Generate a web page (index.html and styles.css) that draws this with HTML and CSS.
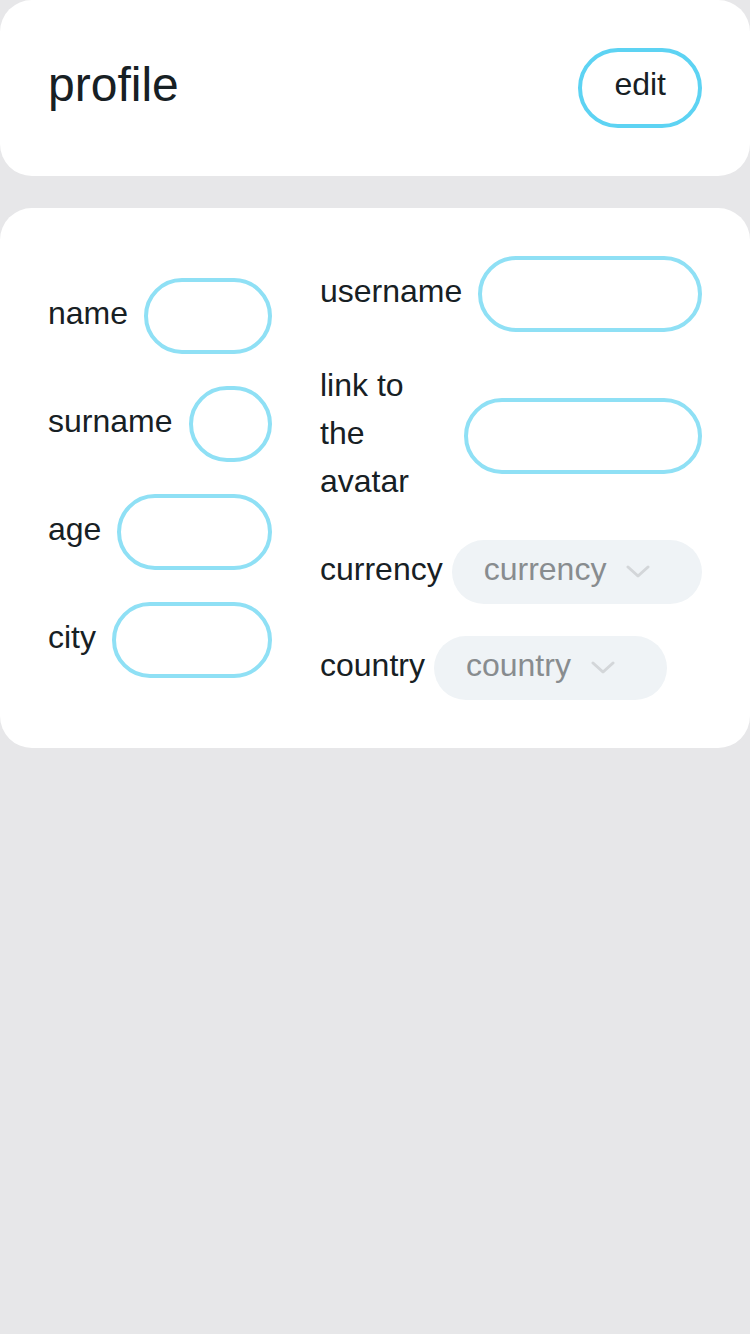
FILE: index.html
```html
<!DOCTYPE html>
<html>
<head>
<meta charset="utf-8">
<link rel="stylesheet" href="styles.css">
</head>
<body>
<div class="page">
  <section class="card header">
    <h1 class="title">profile</h1>
    <button class="edit">edit</button>
  </section>
  <section class="card form">
    <div class="col left">
      <div class="row"><span class="label">name</span><div class="input"></div></div>
      <div class="row"><span class="label">surname</span><div class="input"></div></div>
      <div class="row"><span class="label">age</span><div class="input"></div></div>
      <div class="row"><span class="label">city</span><div class="input"></div></div>
    </div>
    <div class="col right">
      <div class="row"><span class="label">username</span><div class="input"></div></div>
      <div class="row"><span class="label wrap">link to the avatar</span><div class="input"></div></div>
      <div class="row tight"><span class="label">currency</span>
        <div class="select"><span class="sel-text">currency</span>
          <svg class="chev" width="24" height="14" viewBox="0 0 24 14"><path d="M2 2 L12 11 L22 2" fill="none" stroke="#d3d6d9" stroke-width="3" stroke-linecap="round" stroke-linejoin="round"/></svg>
        </div>
      </div>
      <div class="row tight"><span class="label">country</span>
        <div class="select"><span class="sel-text">country</span>
          <svg class="chev" width="24" height="14" viewBox="0 0 24 14"><path d="M2 2 L12 11 L22 2" fill="none" stroke="#d3d6d9" stroke-width="3" stroke-linecap="round" stroke-linejoin="round"/></svg>
        </div>
      </div>
    </div>
  </section>
</div>
</body>
</html>
```
FILE: styles.css
```css
* { box-sizing: border-box; }
html, body {
  margin: 0;
  padding: 0;
  background: #e7e7e9;
  font-family: "Liberation Sans", Arial, sans-serif;
  color: #172024;
}
.page {
  display: flex;
  flex-direction: column;
  gap: 32px;
}
.card {
  background: #ffffff;
  border-radius: 32px;
  padding: 48px;
}
.header {
  display: flex;
  justify-content: space-between;
  align-items: center;
}
.title {
  margin: 0;
  font-size: 48px;
  font-weight: 400;
  line-height: 56px;
  padding-bottom: 6px;
}
.edit {
  font-family: inherit;
  font-size: 32px;
  line-height: 40px;
  color: #172024;
  background: #fff;
  border: 4px solid #5dd3f3;
  border-radius: 40px;
  padding: 12px 32px 20px;
  height: 80px;
}
.form {
  display: flex;
  align-items: center;
  gap: 48px;
}
.col {
  display: flex;
  flex-direction: column;
  gap: 32px;
}
.left { width: 224px; flex: none; }
.right { flex: 1; }
.row {
  display: flex;
  align-items: center;
  gap: 16px;
}
.row.tight { gap: 9px; }
.label {
  font-size: 32px;
  line-height: 48px;
  flex: none;
  margin-top: -3px;
  padding-bottom: 3px;
}
.label.wrap { width: 128px; }
.input {
  flex: 1;
  height: 76px;
  border: 4px solid #8fe0f5;
  border-radius: 38px;
}
.select {
  display: flex;
  align-items: center;
  gap: 20px;
  height: 64px;
  padding: 0 52px 0 32px;
  background: #eff3f6;
  border-radius: 32px;
  font-size: 32px;
  color: #888c8f;
}
.sel-text { padding-bottom: 5px; }
.chev { display: block; }
```
